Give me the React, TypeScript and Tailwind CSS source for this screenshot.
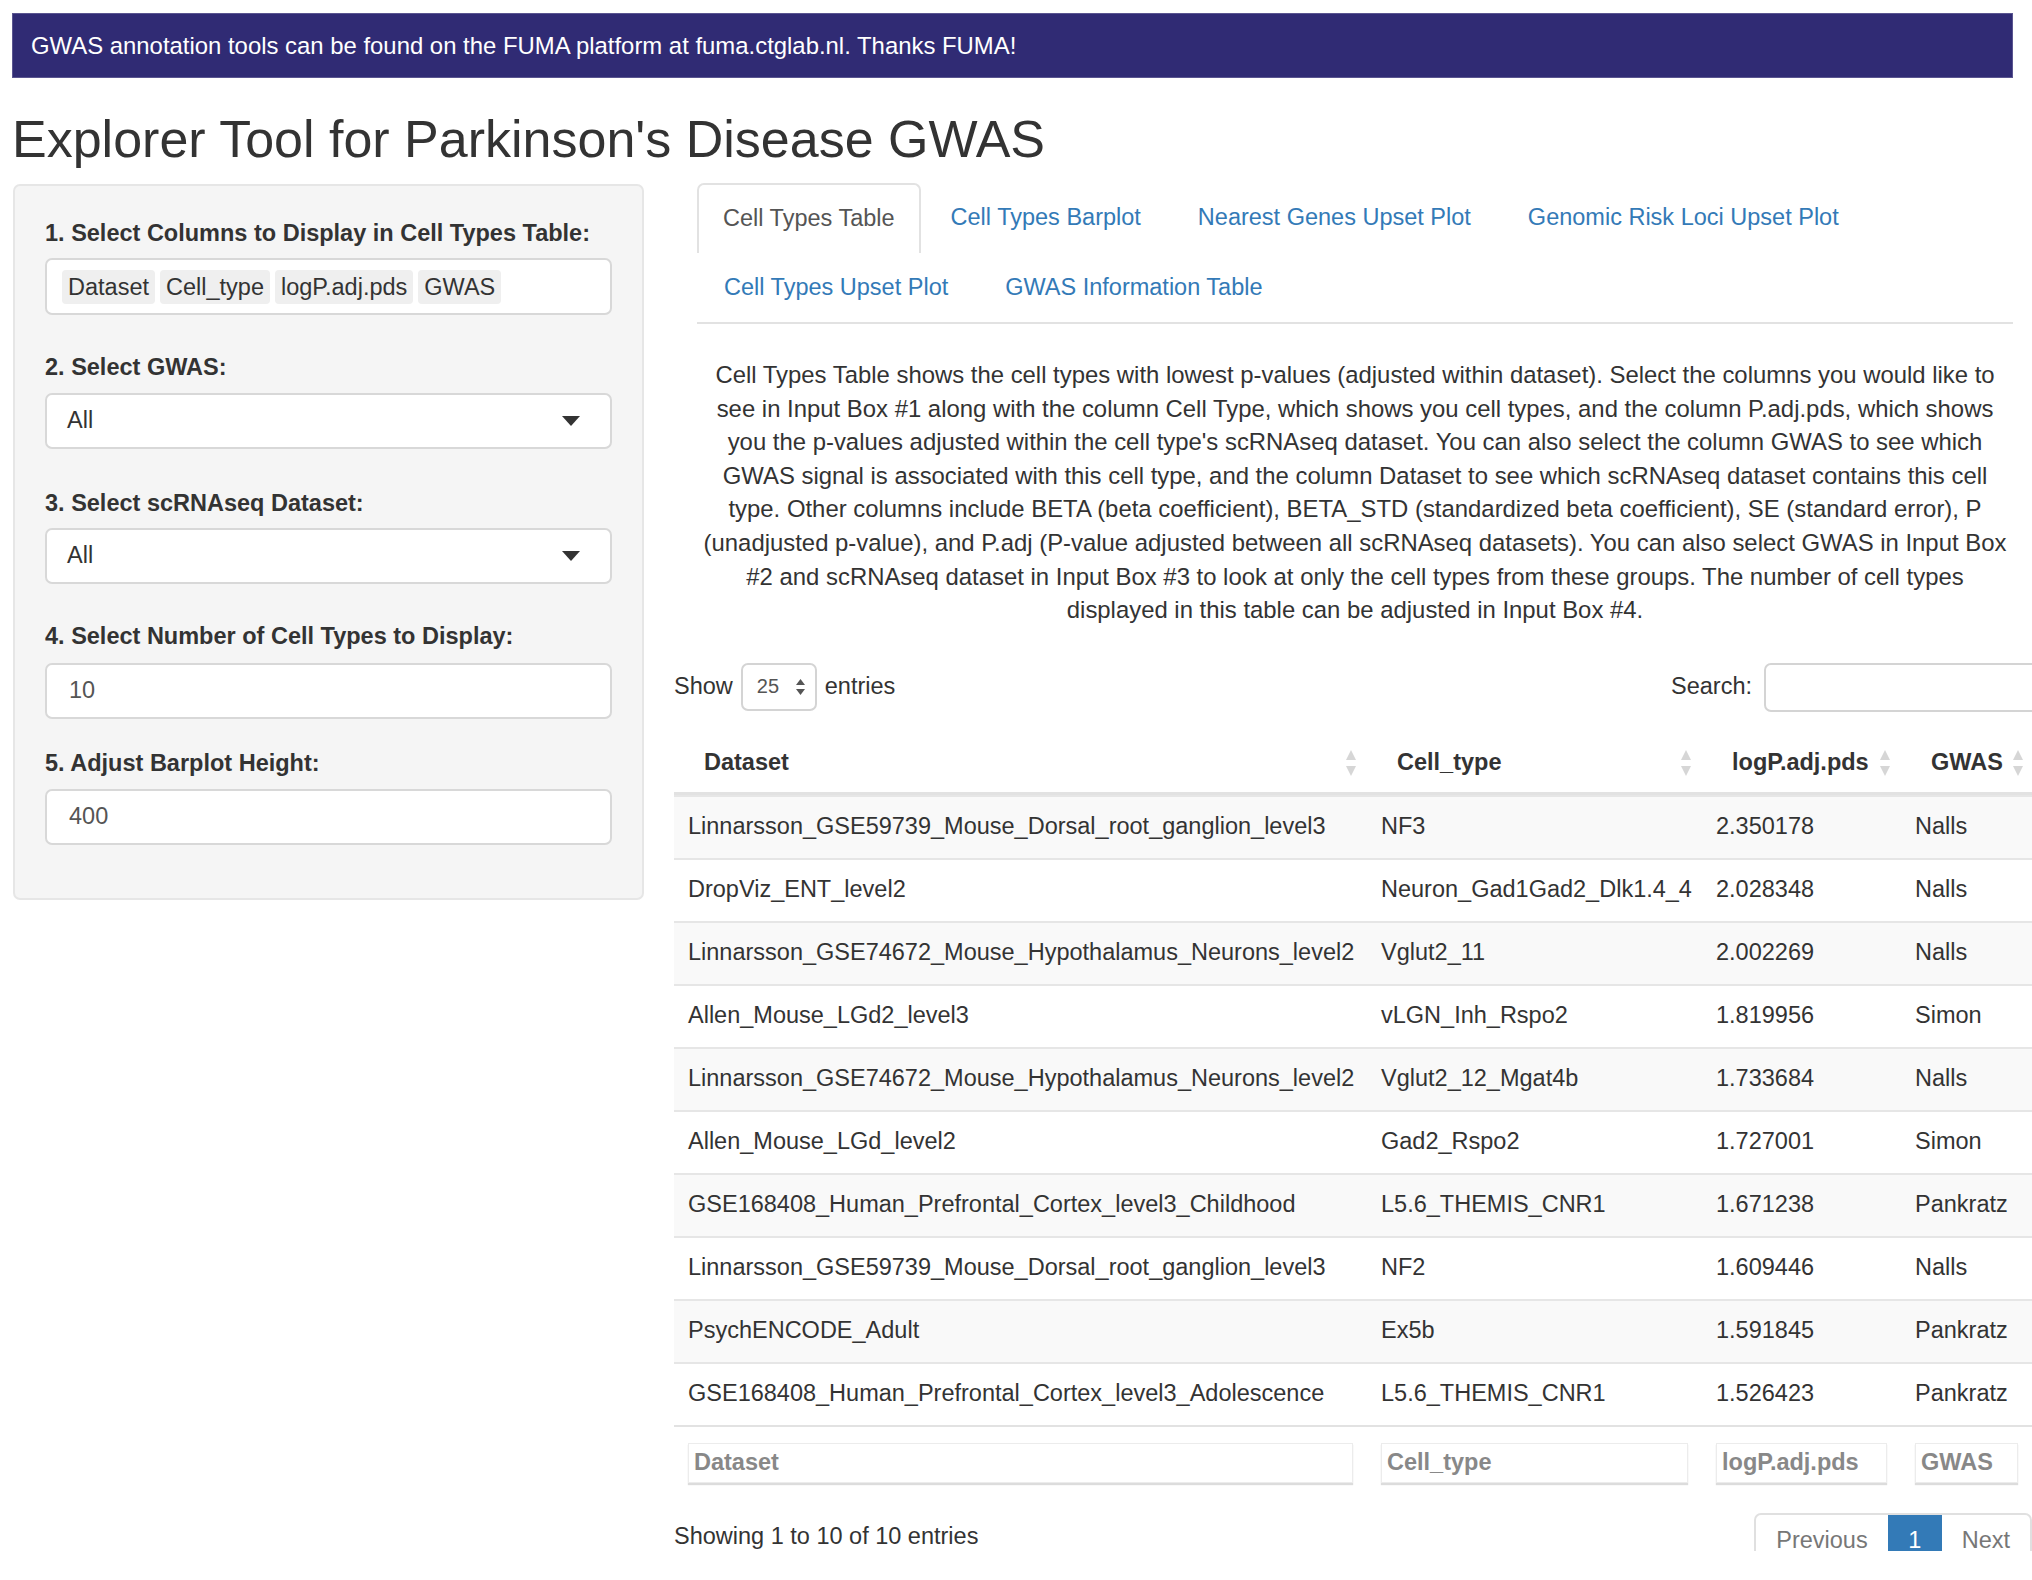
const rows = [
  ["Linnarsson_GSE59739_Mouse_Dorsal_root_ganglion_level3", "NF3", "2.350178", "Nalls"],
  ["DropViz_ENT_level2", "Neuron_Gad1Gad2_Dlk1.4_4", "2.028348", "Nalls"],
  ["Linnarsson_GSE74672_Mouse_Hypothalamus_Neurons_level2", "Vglut2_11", "2.002269", "Nalls"],
  ["Allen_Mouse_LGd2_level3", "vLGN_Inh_Rspo2", "1.819956", "Simon"],
  ["Linnarsson_GSE74672_Mouse_Hypothalamus_Neurons_level2", "Vglut2_12_Mgat4b", "1.733684", "Nalls"],
  ["Allen_Mouse_LGd_level2", "Gad2_Rspo2", "1.727001", "Simon"],
  ["GSE168408_Human_Prefrontal_Cortex_level3_Childhood", "L5.6_THEMIS_CNR1", "1.671238", "Pankratz"],
  ["Linnarsson_GSE59739_Mouse_Dorsal_root_ganglion_level3", "NF2", "1.609446", "Nalls"],
  ["PsychENCODE_Adult", "Ex5b", "1.591845", "Pankratz"],
  ["GSE168408_Human_Prefrontal_Cortex_level3_Adolescence", "L5.6_THEMIS_CNR1", "1.526423", "Pankratz"],
];

const intro = [
  "Cell Types Table shows the cell types with lowest p-values (adjusted within dataset). Select the columns you would like to",
  "see in Input Box #1 along with the column Cell Type, which shows you cell types, and the column P.adj.pds, which shows",
  "you the p-values adjusted within the cell type's scRNAseq dataset. You can also select the column GWAS to see which",
  "GWAS signal is associated with this cell type, and the column Dataset to see which scRNAseq dataset contains this cell",
  "type. Other columns include BETA (beta coefficient), BETA_STD (standardized beta coefficient), SE (standard error), P",
  "(unadjusted p-value), and P.adj (P-value adjusted between all scRNAseq datasets). You can also select GWAS in Input Box",
  "#2 and scRNAseq dataset in Input Box #3 to look at only the cell types from these groups. The number of cell types",
  "displayed in this table can be adjusted in Input Box #4.",
];

const cols = "grid grid-cols-[693px_335px_199px_131px]";

const SortIcon = () => (
  <svg width="12" height="28" viewBox="0 0 12 28" className="shrink-0">
    <path d="M6 1 L11 11 L1 11 Z" fill="#d6d6d6" />
    <path d="M1 17 L11 17 L6 27 Z" fill="#d6d6d6" />
  </svg>
);

const Caret = () => (
  <svg width="18" height="10" viewBox="0 0 18 10">
    <path d="M0 0 L18 0 L9 10 Z" fill="#333" />
  </svg>
);

const Label = ({ children }: { children: React.ReactNode }) => (
  <div className="h-[34px] leading-[34px] font-bold text-[23.5px] text-[#333]">{children}</div>
);

const TextBox = ({ value, cls }: { value: string; cls: string }) => (
  <div className={`h-[56px] rounded-[7px] border-2 border-[#d8d8d8] bg-white flex items-center pl-[22px] text-[23.5px] text-[#555] ${cls}`}>
    {value}
  </div>
);

const SelectBox = ({ cls }: { cls: string }) => (
  <div className={`h-[56px] rounded-[7px] border-2 border-[#d8d8d8] bg-white flex items-center justify-between pl-[20px] pr-[30px] text-[23.5px] text-[#333] ${cls}`}>
    <span>All</span>
    <Caret />
  </div>
);

export default function App() {
  return (
    <div className="w-[2032px] h-[1580px] overflow-hidden bg-white text-[#333] font-['Liberation_Sans',Arial,sans-serif] text-[23.5px] leading-[33.6px]">
      <div className="ml-[12px] mt-[13px] w-[2001px] h-[65px] bg-[#302b74] border border-[#5a5590] flex items-center pl-[18px] text-white text-[23.9px]">
        GWAS annotation tools can be found on the FUMA platform at fuma.ctglab.nl. Thanks FUMA!
      </div>

      <h2 className="ml-[12px] mt-[33px] mb-[17px] text-[52px] leading-[56px] text-[#333]">
        Explorer Tool for Parkinson's Disease GWAS
      </h2>

      <div className="flex items-start">
        {/* sidebar */}
        <div className="ml-[13px] w-[631px] h-[716px] bg-[#f5f5f5] border-2 border-[#e6e6e6] rounded-[7px] px-[30px] pt-[30px]">
          <Label>1. Select Columns to Display in Cell Types Table:</Label>
          <div className="mt-[8px] h-[57px] rounded-[7px] border-2 border-[#d8d8d8] bg-white flex items-center gap-[5px] pl-[15px]">
            {["Dataset", "Cell_type", "logP.adj.pds", "GWAS"].map((t) => (
              <span key={t} className="h-[34px] leading-[34px] px-[6px] rounded-[4px] bg-[#efefef] text-[#333]">
                {t}
              </span>
            ))}
          </div>

          <div className="mt-[35px]">
            <Label>2. Select GWAS:</Label>
            <SelectBox cls="mt-[9px]" />
          </div>

          <div className="mt-[37px]">
            <Label>3. Select scRNAseq Dataset:</Label>
            <SelectBox cls="mt-[8px]" />
          </div>

          <div className="mt-[35px]">
            <Label>4. Select Number of Cell Types to Display:</Label>
            <TextBox value="10" cls="mt-[10px]" />
          </div>

          <div className="mt-[27px]">
            <Label>5. Adjust Barplot Height:</Label>
            <TextBox value="400" cls="mt-[9px]" />
          </div>
        </div>

        {/* main */}
        <div className="ml-[53px] w-[1316px] -mt-[1px]">
          <div className="flex flex-wrap border-b-2 border-[#e2e2e2]">
            <div className="h-[70px] px-[24px] flex items-center border-2 border-b-0 border-[#e2e2e2] rounded-t-[7px] text-[#555] mr-[3px]">
              Cell Types Table
            </div>
            {["Cell Types Barplot", "Nearest Genes Upset Plot", "Genomic Risk Loci Upset Plot", "Cell Types Upset Plot", "GWAS Information Table"].map((t) => (
              <div key={t} className="h-[69px] px-[27px] flex items-center text-[#337ab7] mr-[3px]">
                {t}
              </div>
            ))}
          </div>

          <div className="mt-[34px] text-center text-[#333] whitespace-nowrap text-[23.9px]">
            {intro.map((l, i) => (
              <div key={i}>{l}</div>
            ))}
          </div>

          <div className="-ml-[23px] w-[1358px]">
            <div className="mt-[36px] flex items-center justify-between">
              <div className="flex items-center gap-[8px] text-[#333]">
                <span>Show</span>
                <div className="w-[76px] h-[48px] rounded-[7px] border-2 border-[#d4d4d4] flex items-center justify-between pl-[14px] pr-[10px] text-[20px] text-[#555]">
                  <span>25</span>
                  <svg width="9" height="16" viewBox="0 0 9 16">
                    <path d="M4.5 0 L9 6 L0 6 Z" fill="#555" />
                    <path d="M0 10 L9 10 L4.5 16 Z" fill="#555" />
                  </svg>
                </div>
                <span>entries</span>
              </div>
              <div className="flex items-center gap-[12px] -mr-[60px]">
                <span>Search:</span>
                <div className="w-[328px] h-[49px] rounded-[7px] border-2 border-[#d4d4d4]" />
              </div>
            </div>

            {/* header */}
            <div className={`${cols} mt-[22px] h-[61px] border-b-[3px] border-[#e2e2e2] font-bold`}>
              {["Dataset", "Cell_type", "logP.adj.pds", "GWAS"].map((h, i) => (
                <div key={h} className={`flex items-center justify-between pl-[30px] ${i === 3 ? "pr-[8px]" : "pr-[10px]"}`}>
                  <span>{h}</span>
                  <SortIcon />
                </div>
              ))}
            </div>

            {rows.map((r, i) => (
              <div key={i} className={`${cols} h-[63px] items-center border-t-2 border-[#e6e6e6] ${i % 2 === 0 ? "bg-[#f9f9f9]" : "bg-white"}`}>
                {r.map((c, j) => (
                  <div key={j} className="pl-[14px] whitespace-nowrap">
                    {c}
                  </div>
                ))}
              </div>
            ))}

            {/* footer filters */}
            <div className={`${cols} h-[74px] items-center border-t-2 border-[#e2e2e2]`}>
              {["Dataset", "Cell_type", "logP.adj.pds", "GWAS"].map((h) => (
                <div key={h} className="px-[14px]">
                  <div className="h-[40px] flex items-center pl-[5px] border border-[#ececec] shadow-[0_2px_1px_#dcdcdc] font-bold text-[#888] whitespace-nowrap overflow-hidden">
                    {h}
                  </div>
                </div>
              ))}
            </div>

            <div className="h-[52px] overflow-hidden flex items-start justify-between">
              <div className="mt-[21px]">Showing 1 to 10 of 10 entries</div>
              <div className="mt-[14px] flex h-[57px] rounded-[7px] border-2 border-[#e0e0e0] text-[#777]">
                <div className="px-[20px] flex items-center">Previous</div>
                <div className="w-[54px] flex items-center justify-center bg-[#337ab7] text-white">1</div>
                <div className="px-[20px] flex items-center">Next</div>
              </div>
            </div>
          </div>
        </div>
      </div>
    </div>
  );
}
